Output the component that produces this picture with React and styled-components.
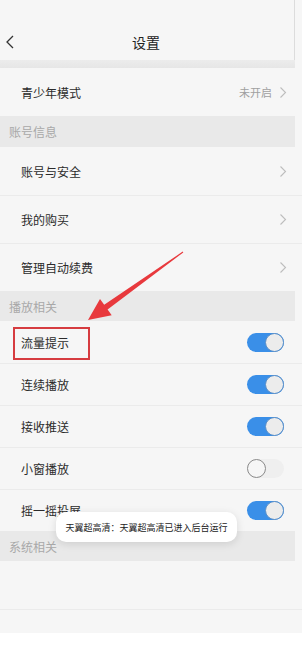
import styled, { createGlobalStyle } from "styled-components";

const GlobalStyle = createGlobalStyle`
  html, body {
    margin: 0;
    padding: 0;
    background: #ffffff;
  }
  body {
    font-family: "Noto Sans CJK SC", "Noto Sans", sans-serif;
    color: #333;
  }
`;

const Page = styled.div`
  position: relative;
  width: 302px;
  height: 647px;
  overflow: hidden;
  background: #ffffff;
`;

const Screen = styled.div`
  background: #f6f6f6;
  display: flex;
  flex-direction: column;
`;

const Header = styled.div`
  height: 60px;
  display: flex;
  align-items: flex-end;
  justify-content: center;
  position: relative;
  border-right: 1px solid #dcdcdc;
  margin-right: 7px;
  background: #f6f6f6;
`;

const HeaderBar = styled.div`
  height: 36px;
  width: 100%;
  display: flex;
  align-items: center;
  justify-content: center;
  position: relative;
`;

const Back = styled.svg`
  position: absolute;
  left: 5px;
  top: 11px;
`;

const Title = styled.div`
  font-size: 14px;
  color: #222;
  line-height: 20px;
  margin-left: -2px;
`;

const Spacer = styled.div`
  height: 8px;
  background: linear-gradient(#ececec, #e6e6e6);
  margin-right: 7px;
`;

const Section = styled.div`
  height: ${(p) => p.h}px;
  background: #e9e9e9;
  margin-right: 7px;
  display: flex;
  align-items: center;
  padding-left: 9px;
  font-size: 12px;
  color: #a8a8a8;
`;

const Row = styled.div`
  height: ${(p) => p.h}px;
  display: flex;
  align-items: center;
  justify-content: space-between;
  padding: 0 15px 0 21px;
  background: #f6f6f6;
  border-top: ${(p) => (p.line ? "1px solid #ebebeb" : "none")};
  box-sizing: border-box;
`;

const Label = styled.span`
  position: relative;
  font-size: 12px;
  color: #2b2b2b;
  line-height: 17px;

  ${(p) =>
    p.highlight &&
    `
    &::after {
      content: "";
      position: absolute;
      left: -8px;
      right: -21px;
      top: -7px;
      bottom: -9px;
      border: 2px solid #d63c40;
    }
  `}
`;

const Right = styled.div`
  display: flex;
  align-items: center;
  gap: 7px;
`;

const Value = styled.span`
  font-size: 11px;
  color: #a0a0a0;
`;

const Track = styled.div`
  position: relative;
  width: 37px;
  height: 19px;
  border-radius: 10px;
  background: ${(p) => (p.on ? "#3a8fe8" : "#efefef")};
  margin-right: 3px;
`;

const Knob = styled.div`
  position: absolute;
  top: 0;
  left: ${(p) => (p.on ? "18px" : "0")};
  width: 17px;
  height: 17px;
  border-radius: 50%;
  background: ${(p) => (p.on ? "#ececec" : "#f6f6f6")};
  border: 1px solid ${(p) => (p.on ? "#5a8fc8" : "#8a8a8a")};
`;

const Toast = styled.div`
  position: absolute;
  left: 56px;
  top: 512px;
  width: 181px;
  height: 30px;
  border-radius: 10px;
  background: #ffffff;
  box-shadow: 0 2px 8px rgba(0, 0, 0, 0.12);
  display: flex;
  align-items: center;
  justify-content: center;
  font-size: 9px;
  color: #222;
  white-space: nowrap;
`;

const Arrow = styled.svg`
  position: absolute;
  left: 0;
  top: 0;
  pointer-events: none;
`;

const Chevron = () => (
  <svg width="8" height="13" viewBox="0 0 8 13">
    <path d="M1.5 1.5 L6.5 6.5 L1.5 11.5" fill="none" stroke="#bdbdbd" strokeWidth="1.1" />
  </svg>
);

const Toggle = ({ on }) => (
  <Track on={on}>
    <Knob on={on} />
  </Track>
);

const links = ["账号与安全", "我的购买", "管理自动续费"];
const toggles = [
  { label: "流量提示", on: true, highlight: true },
  { label: "连续播放", on: true },
  { label: "接收推送", on: true },
  { label: "小窗播放", on: false },
  { label: "摇一摇投屏", on: true },
];

export default function App() {
  return (
    <Page>
      <GlobalStyle />
      <Screen>
        <Header>
          <HeaderBar>
            <Back width="10" height="14" viewBox="0 0 10 14">
              <path d="M8 1 L2 7 L8 13" fill="none" stroke="#333" strokeWidth="1.3" />
            </Back>
            <Title>设置</Title>
          </HeaderBar>
        </Header>
        <Spacer />
        <Row h={48}>
          <Label>青少年模式</Label>
          <Right>
            <Value>未开启</Value>
            <Chevron />
          </Right>
        </Row>
        <Section h={31}>账号信息</Section>
        {links.map((l, i) => (
          <Row h={48} key={l} line={i > 0}>
            <Label>{l}</Label>
            <Chevron />
          </Row>
        ))}
        <Section h={30}>播放相关</Section>
        {toggles.map((t, i) => (
          <Row h={42} key={t.label} line={i > 0}>
            <Label highlight={t.highlight}>{t.label}</Label>
            <Toggle on={t.on} />
          </Row>
        ))}
        <Section h={30}>系统相关</Section>
        <Row h={48} />
        <Row h={24} line />
      </Screen>
      <Arrow width="302" height="647">
        <polygon
          points="88,320 100,299 104.2,304.8 182.7,251.6 183.3,252.4 107.6,309.6 111.7,315.3"
          fill="#e8393d"
        />
      </Arrow>
      <Toast>天翼超高清：天翼超高清已进入后台运行</Toast>
    </Page>
  );
}
